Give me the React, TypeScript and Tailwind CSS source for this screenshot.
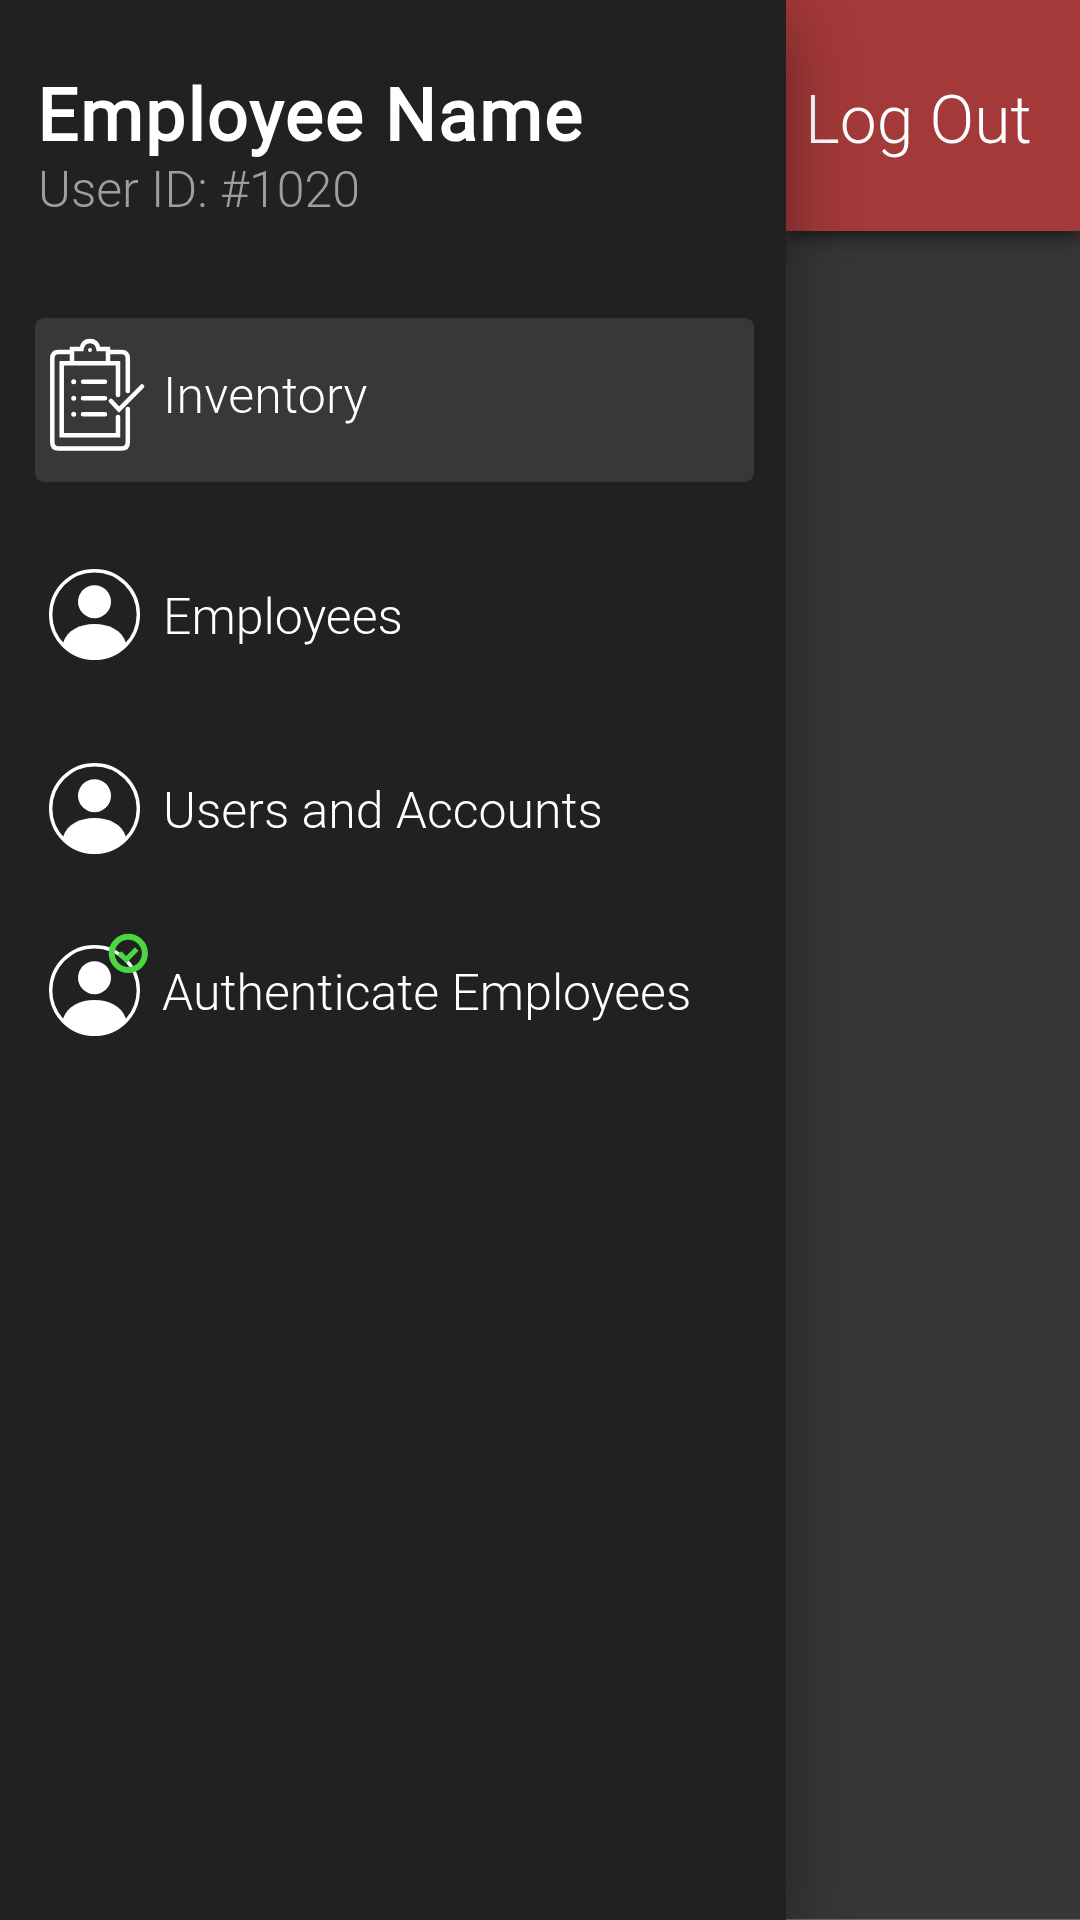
import type { ReactNode } from "react";

function ClipboardIcon() {
  return (
    <svg width="96" height="114" viewBox="49 338 96 114" fill="none" stroke="#fff" strokeWidth="4.5" className="-mt-[10px] block">
      <path d="M70 352H58.500Q52.300 352 52.300 358.500V442Q52.300 448.500 58.500 448.500H121.500Q127.800 448.500 127.800 442V409M127.800 391V358.500Q127.800 352 121.500 352H110" strokeLinecap="round" />
      <path d="M118 395V363.200H61.700V435.300H118V417" strokeLinecap="round" />
      <path d="M72 363V349H81.500C82.500 343 86 341 90 341C94 341 97.500 343 98.500 349H108V363" />
      <circle cx="90" cy="350" r="2" fill="#fff" stroke="none" />
      <g strokeLinecap="round">
        <path d="M83 381.800H105M83 398.200H105M83 414.200H105" />
        <path d="M73.700 381.800h.01M73.700 398.200h.01M73.700 414.200h.01" strokeWidth="5" />
        <path d="M111 401L119 409.500L142 386.500" />
      </g>
    </svg>
  );
}

function PersonIcon() {
  return (
    <svg width="91" height="91" viewBox="0 0 91 91" className="block">
      <circle cx="45.500" cy="45.500" r="43.800" fill="none" stroke="#fff" strokeWidth="3.400" />
      <circle cx="45.500" cy="32.700" r="16.500" fill="#fff" />
      <path d="M14 74C18 61 31 55 45.500 55C60 55 73 61 77 74C69 84 58 91 45.500 91S22 84 14 74Z" fill="#fff" />
    </svg>
  );
}

function VerifiedBadge() {
  return (
    <svg width="40" height="40" viewBox="0 0 40 40" className="absolute left-[59px] -top-[12px]" fill="none" stroke="#4cd642">
      <circle cx="20.300" cy="20.300" r="16.600" strokeWidth="6" />
      <path d="M11.500 20L18.200 26.500L28.800 16" strokeWidth="5.200" />
    </svg>
  );
}

function MenuItem({ icon, label, className }: { icon: ReactNode; label: ReactNode; className: string }) {
  return (
    <a className={`flex items-center pl-[14px] ${className}`}>
      <div className="relative w-[114px] shrink-0">{icon}</div>
      {label}
    </a>
  );
}

export default function App() {
  return (
    <div className="flex h-[1920px] w-[1080px] overflow-hidden bg-[#373737] font-['Roboto',sans-serif] font-light text-white">
      <aside className="relative z-10 h-full w-[786px] shrink-0 bg-[#212121] px-[35px] pt-[78px] shadow-[0_20px_60px_rgba(0,0,0,0.4)]">
        <header className="h-[240px] pl-[3px]">
          <h1 className="h-[76px] whitespace-nowrap text-[72px] leading-[76px] font-normal tracking-[1.9px] [-webkit-text-stroke:2.2px_white]">Employee Name</h1>
          <p className="mt-[6px] h-[60px] whitespace-nowrap text-[50px] leading-[60px] text-[#9e9e9e]">User ID: #1020</p>
        </header>
        <nav className="w-[719px]">
          <MenuItem
            className="h-[164px] rounded-[9px] bg-[#383838]"
            icon={<ClipboardIcon />}
            label={<span className="-mt-[8px] whitespace-nowrap text-[50px] leading-[60px] tracking-[0.2px]">Inventory</span>}
          />
          <MenuItem
            className="mt-[87px] h-[91px]"
            icon={<PersonIcon />}
            label={<span className="mt-[4px] whitespace-nowrap text-[50px] leading-[60px]">Employees</span>}
          />
          <MenuItem
            className="mt-[103px] h-[91px]"
            icon={<PersonIcon />}
            label={<span className="mt-[4px] whitespace-nowrap text-[50px] leading-[60px]">Users and Accounts</span>}
          />
          <MenuItem
            className="mt-[91px] h-[91px]"
            icon={<><PersonIcon /><VerifiedBadge /></>}
            label={<span className="mt-[4px] -ml-px whitespace-nowrap text-[50px] leading-[60px]">Authenticate Employees</span>}
          />
        </nav>
      </aside>
      <main className="min-w-0 flex-1 border-b border-[#6a6a6a]">
        <div className="h-[231px] bg-[#a43939] pt-[81px] pl-[19px] shadow-[0_5px_18px_rgba(0,0,0,0.6)]">
          <span className="whitespace-nowrap text-[66px] leading-[80px]">Log Out</span>
        </div>
      </main>
    </div>
  );
}
